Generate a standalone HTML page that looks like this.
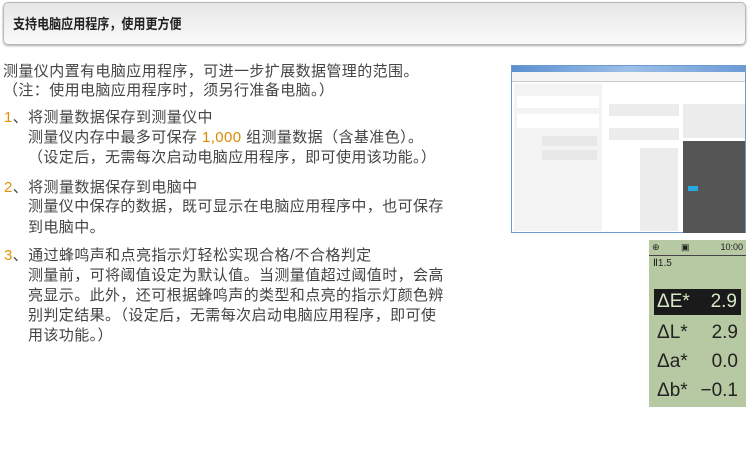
<!DOCTYPE html>
<html><head><meta charset="utf-8"><style>
*{margin:0;padding:0;box-sizing:border-box}
body{width:750px;height:452px;background:#fff;position:relative;overflow:hidden;font-family:"Liberation Sans","Noto Sans CJK SC",sans-serif;color:#444}
.hd{position:absolute;left:3px;top:2px;width:743px;height:43px;border:1px solid #b8b8b8;border-radius:5px;background:linear-gradient(#e6e6e6,#fafafa);box-shadow:0 1px 2px #aaa}
.hd span{position:absolute;left:9px;top:11px;font-size:14px;font-weight:bold;color:#222;transform:scaleX(0.86);transform-origin:left;white-space:nowrap}
.t{position:absolute;font-size:15px;letter-spacing:0.4px;white-space:nowrap;line-height:20px}
.n{color:#e0900a}
.o{color:#d98a00}
</style></head><body>
<div class="hd"><span>支持电脑应用程序，使用更方便</span></div>
<div class="t" style="left:3px;top:62px">测量仪内置有电脑应用程序，可进一步扩展数据管理的范围。</div>
<div class="t" style="left:3px;top:81px">（注：使用电脑应用程序时，须另行准备电脑。）</div>
<div class="t" style="left:4px;top:108px"><span class="n">1</span>、将测量数据保存到测量仪中</div>
<div class="t" style="left:28px;top:128px">测量仪内存中最多可保存 <span class="o">1,000</span> 组测量数据（含基准色）。</div>
<div class="t" style="left:28px;top:148px">（设定后，无需每次启动电脑应用程序，即可使用该功能。）</div>
<div class="t" style="left:4px;top:178px"><span class="n">2</span>、将测量数据保存到电脑中</div>
<div class="t" style="left:28px;top:197px">测量仪中保存的数据，既可显示在电脑应用程序中，也可保存</div>
<div class="t" style="left:28px;top:218px">到电脑中。</div>
<div class="t" style="left:4px;top:246px"><span class="n">3</span>、通过蜂鸣声和点亮指示灯轻松实现合格/不合格判定</div>
<div class="t" style="left:28px;top:266px">测量前，可将阈值设定为默认值。当测量值超过阈值时，会高</div>
<div class="t" style="left:28px;top:286px">亮显示。此外，还可根据蜂鸣声的类型和点亮的指示灯颜色辨</div>
<div class="t" style="left:28px;top:306px">别判定结果。（设定后，无需每次启动电脑应用程序，即可使</div>
<div class="t" style="left:28px;top:326px">用该功能。）</div>

<div style="position:absolute;left:511px;top:65px;width:235px;height:168px;background:#fff;border:1px solid #6a9ad0">
 <div style="height:6px;background:linear-gradient(90deg,#5b8fd0,#9cc0e8,#6e9bd6)"></div>
 <div style="height:10px;border-bottom:1px solid #ccc;background:#f4f4f4"></div>
 <div style="position:absolute;left:2px;top:18px;width:88px;height:147px;background:#f3f3f3"></div>
 <div style="position:absolute;left:5px;top:30px;width:82px;height:12px;background:#fff"></div>
 <div style="position:absolute;left:5px;top:48px;width:82px;height:14px;background:#fff"></div>
 <div style="position:absolute;left:30px;top:70px;width:55px;height:10px;background:#e8e8e8"></div>
 <div style="position:absolute;left:30px;top:84px;width:55px;height:10px;background:#e8e8e8"></div>
 <div style="position:absolute;left:97px;top:38px;width:70px;height:12px;background:#ececec"></div>
 <div style="position:absolute;left:97px;top:62px;width:70px;height:12px;background:#ececec"></div>
 <div style="position:absolute;left:128px;top:82px;width:38px;height:83px;background:#ececec"></div>
 <div style="position:absolute;left:171px;top:38px;width:62px;height:34px;background:#ececec"></div>
 <div style="position:absolute;left:171px;top:75px;width:62px;height:92px;background:#555"></div>
 <div style="position:absolute;left:176px;top:120px;width:10px;height:5px;background:#2aa8e0"></div>
</div>

<div style="position:absolute;left:649px;top:240px;width:97px;height:167px;background:#b6c9a2;font-family:'Liberation Sans',sans-serif;color:#222">
 <div style="position:absolute;left:0;top:0;width:97px;height:16px;border-bottom:1px solid #444;font-size:9px;line-height:14px">
  <span style="position:absolute;left:3px">⊕</span><span style="position:absolute;left:32px">▣</span><span style="position:absolute;right:3px">10:00</span></div>
 <div style="position:absolute;left:4px;top:18px;font-size:10px">Ⅱ1.5</div>
 <div style="position:absolute;left:5px;top:49px;width:87px;height:26px;background:#1a1a1a;color:#d8e6c8;font-size:19px;line-height:26px;padding-left:3px;white-space:nowrap">ΔE* <span style="position:absolute;right:4px">2.9</span></div>
 <div style="position:absolute;left:8px;top:81px;width:84px;font-size:19px;line-height:24px">ΔL*<span style="position:absolute;right:3px">2.9</span></div>
 <div style="position:absolute;left:8px;top:110px;width:84px;font-size:19px;line-height:24px">Δa*<span style="position:absolute;right:3px">0.0</span></div>
 <div style="position:absolute;left:8px;top:139px;width:84px;font-size:19px;line-height:24px">Δb*<span style="position:absolute;right:3px">−0.1</span></div>
</div>
</body></html>
